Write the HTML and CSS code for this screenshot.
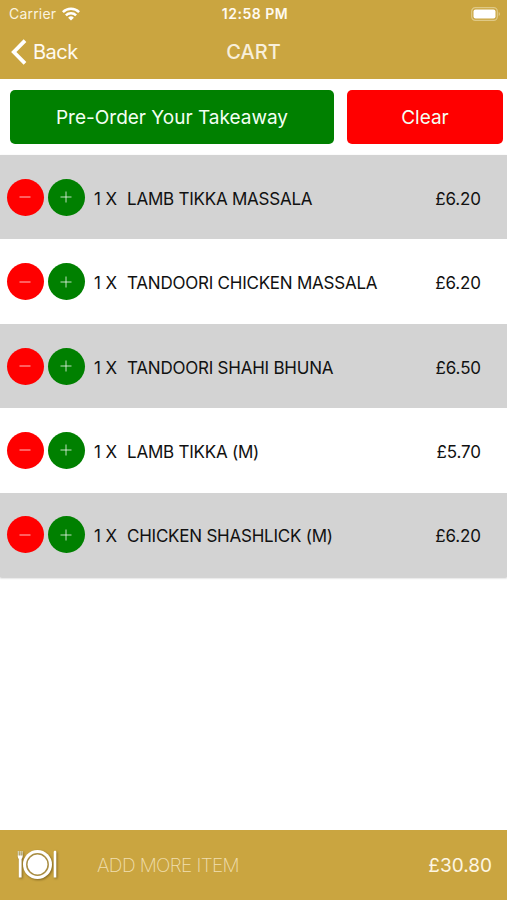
FILE: index.html
```html
<!DOCTYPE html>
<html lang="en">
<head>
    <meta charset="UTF-8">
    <meta name="viewport" content="width=device-width, initial-scale=1.0">
    <title>Cart</title>
    <link rel="stylesheet" href="styles.css">
</head>
<body>
    <header class="header">
        <div class="status-bar">
            <div class="carrier">
                <span>Carrier</span>
                <svg width="18" height="14" viewBox="0 0 18 14" fill="none" stroke="#fff" stroke-width="2.5">
                    <path d="M0.9 5.1a11.5 11.5 0 0 1 16.2 0"/>
                    <path d="M3.9 8.3a7.2 7.2 0 0 1 10.2 0"/>
                    <path d="M9 13.6 6.1 10.7a4.1 4.1 0 0 1 5.8 0z" fill="#fff" stroke="none"/>
                </svg>
            </div>
            <span class="time">12:58 PM</span>
            <svg class="battery" width="30" height="14" viewBox="0 0 30 14">
                <rect x="0.7" y="0.7" width="25.6" height="12.6" rx="3.6" fill="none" stroke="#dfc986" stroke-width="1.2"/>
                <rect x="2.5" y="2.5" width="22" height="9" rx="2" fill="#fff"/>
                <path d="M27.7 5v4c1.7-.7 1.7-3.3 0-4z" fill="#dfc986"/>
            </svg>
        </div>
        <nav class="nav-bar">
            <a class="back">
                <svg width="16" height="26" viewBox="0 0 16 26" fill="none" stroke="#fff" stroke-width="3.8">
                    <path d="M14 1.7 2.8 13 14 24.3"/>
                </svg>
                <span>Back</span>
            </a>
            <h1 class="title">CART</h1>
        </nav>
    </header>

    <div class="actions">
        <button class="btn btn-order">Pre-Order Your Takeaway</button>
        <button class="btn btn-clear">Clear</button>
    </div>

    <ul class="cart">
        <li class="item">
            <button class="round minus"><svg width="12" height="12"><path d="M0.5 6h11"/></svg></button>
            <button class="round plus"><svg width="12" height="12"><path d="M0.5 6h11M6 0.5v11"/></svg></button>
            <span class="qty">1 X</span>
            <span class="name">LAMB TIKKA MASSALA</span>
            <span class="price">£6.20</span>
        </li>
        <li class="item">
            <button class="round minus"><svg width="12" height="12"><path d="M0.5 6h11"/></svg></button>
            <button class="round plus"><svg width="12" height="12"><path d="M0.5 6h11M6 0.5v11"/></svg></button>
            <span class="qty">1 X</span>
            <span class="name">TANDOORI CHICKEN MASSALA</span>
            <span class="price">£6.20</span>
        </li>
        <li class="item">
            <button class="round minus"><svg width="12" height="12"><path d="M0.5 6h11"/></svg></button>
            <button class="round plus"><svg width="12" height="12"><path d="M0.5 6h11M6 0.5v11"/></svg></button>
            <span class="qty">1 X</span>
            <span class="name">TANDOORI SHAHI BHUNA</span>
            <span class="price">£6.50</span>
        </li>
        <li class="item">
            <button class="round minus"><svg width="12" height="12"><path d="M0.5 6h11"/></svg></button>
            <button class="round plus"><svg width="12" height="12"><path d="M0.5 6h11M6 0.5v11"/></svg></button>
            <span class="qty">1 X</span>
            <span class="name">LAMB TIKKA (M)</span>
            <span class="price">£5.70</span>
        </li>
        <li class="item">
            <button class="round minus"><svg width="12" height="12"><path d="M0.5 6h11"/></svg></button>
            <button class="round plus"><svg width="12" height="12"><path d="M0.5 6h11M6 0.5v11"/></svg></button>
            <span class="qty">1 X</span>
            <span class="name">CHICKEN SHASHLICK (M)</span>
            <span class="price">£6.20</span>
        </li>
    </ul>

    <footer class="footer">
        <svg class="plate" width="42" height="32" viewBox="0 0 42 32">
            <circle cx="20.5" cy="15.5" r="14.5" fill="#fff"/>
            <circle cx="20.5" cy="15.5" r="10.7" fill="none" stroke="#a88d43" stroke-width="1.5"/>
            <path d="M1.3 2v5.5M3.2 2v5.5M5.1 2v5.5" stroke="#d9dccf" stroke-width="1.1"/>
            <path d="M0.8 6.5h4.8c0 2.5-.5 3-1 3.5V28.5H1.8V10c-.5-.5-1-1-1-3.5z" fill="#fff"/>
            <path d="M36.7 3c0-1.5 2.6-2 2.6 0v25.5h-2.6z" fill="#fff"/>
        </svg>
        <span class="add-more">ADD MORE ITEM</span>
        <span class="total">£30.80</span>
    </footer>
</body>
</html>
```
FILE: styles.css
```css
* {
    box-sizing: border-box;
}
body {
    margin: 0;
    height: 900px;
    display: flex;
    flex-direction: column;
    background-color: #fff;
    font-family: Inter, "Liberation Sans", sans-serif;
    overflow: hidden;
}
svg {
    display: block;
    flex: none;
}
.header {
    height: 79px;
    background-color: #caa540;
    color: #fff;
}
.status-bar {
    height: 27px;
    padding: 0 6px 0 9px;
    display: grid;
    grid-template-columns: 1fr auto 1fr;
    align-items: center;
}
.carrier {
    display: flex;
    align-items: center;
    gap: 6px;
    font-size: 14px;
    letter-spacing: 0.2px;
    color: #fbf3df;
}
.time {
    font-size: 14px;
    font-weight: 600;
    letter-spacing: 0.5px;
    color: #fffaf0;
}
.battery {
    justify-self: end;
}
.nav-bar {
    height: 50px;
    padding: 0 11px;
    display: grid;
    grid-template-columns: 1fr auto 1fr;
    align-items: center;
}
.back {
    display: flex;
    align-items: center;
    gap: 6px;
    font-size: 20px;
    letter-spacing: -0.5px;
    color: #fffaf0;
}
.title {
    margin: 0;
    font-size: 20px;
    font-weight: 500;
    letter-spacing: 0;
    color: #f8efda;
}
.actions {
    height: 76px;
    padding: 11px 4px 11px 10px;
    display: flex;
    gap: 13px;
}
.btn {
    border: none;
    border-radius: 5px;
    padding: 0;
    color: #f3fff3;
    font-family: inherit;
    font-size: 19px;
}
.btn-order {
    width: 324px;
    background-color: #008000;
}
.btn-clear {
    flex: 1;
    background-color: #ff0000;
}
.cart {
    height: 422px;
    margin: 0;
    padding: 0;
    list-style: none;
    display: flex;
    flex-direction: column;
    box-shadow: 0 1px 2px rgba(0, 0, 0, 0.25);
}
.item {
    flex: 1;
    padding: 0 26px 0 7px;
    display: flex;
    align-items: center;
    background-color: #fff;
    font-size: 17px;
    color: #111;
}
.item:nth-child(odd) {
    background-color: #d3d3d3;
}
.round {
    width: 37px;
    height: 37px;
    margin-right: 4px;
    padding: 0 1px 0 0;
    border: none;
    border-radius: 50%;
    display: flex;
    align-items: center;
    justify-content: center;
}
.round path {
    stroke: #fff;
    stroke-opacity: 0.75;
    stroke-width: 1;
}
.minus {
    background-color: #ff0000;
}
.plus {
    background-color: #008000;
}
.qty {
    width: 33px;
    margin-left: 5px;
    padding-top: 3px;
    letter-spacing: -0.1px;
    white-space: nowrap;
}
.name {
    padding-top: 3px;
    letter-spacing: -0.23px;
}
.price {
    margin-left: auto;
    padding-top: 3px;
    letter-spacing: -0.1px;
}
.footer {
    height: 70px;
    margin-top: auto;
    padding: 0 15px 0 17px;
    display: flex;
    align-items: center;
    background-color: #caa540;
}
.plate {
    filter: drop-shadow(1px 1px 1px rgba(80, 60, 10, 0.6));
}
.add-more {
    margin-left: 38px;
    font-size: 19px;
    font-weight: 200;
    letter-spacing: -0.6px;
    color: #f0dfb0;
}
.total {
    margin-left: auto;
    font-size: 19px;
    color: #fdf6e3;
}
```
